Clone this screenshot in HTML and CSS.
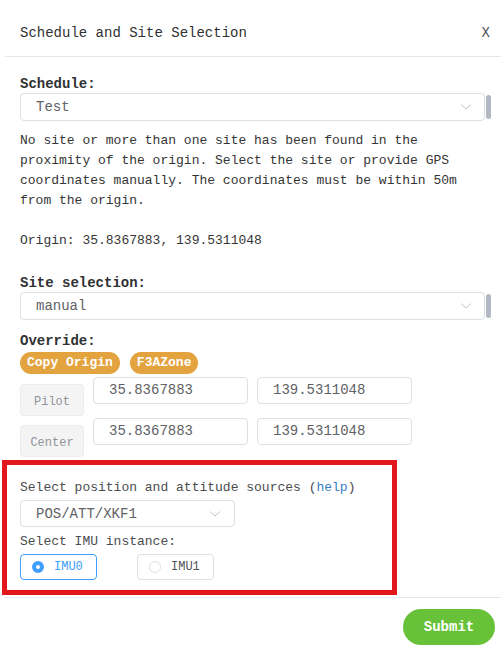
FILE: index.html
```html
<!DOCTYPE html>
<html>
<head>
<meta charset="utf-8">
<link rel="stylesheet" href="styles.css">
</head>
<body>
<div class="modal">
  <div class="header">
    <span class="title">Schedule and Site Selection</span>
    <span class="close">X</span>
  </div>
  <div class="content">
    <div class="label">Schedule:</div>
    <div class="select-row">
      <div class="select wide"><span>Test</span>
        <svg class="chev" width="12" height="8" viewBox="0 0 12 8"><polyline points="1,1.5 6,6 11,1.5" fill="none" stroke="#c0c4cc" stroke-width="1"/></svg>
      </div>
      <div class="scrollbar"></div>
    </div>
    <p class="info">No site or more than one site has been found in the proximity of the origin. Select the site or provide GPS coordinates manually. The coordinates must be within 50m from the origin.<br><br>Origin: 35.8367883, 139.5311048</p>
    <div class="label site">Site selection:</div>
    <div class="select-row">
      <div class="select wide"><span>manual</span>
        <svg class="chev" width="12" height="8" viewBox="0 0 12 8"><polyline points="1,1.5 6,6 11,1.5" fill="none" stroke="#c0c4cc" stroke-width="1"/></svg>
      </div>
      <div class="scrollbar"></div>
    </div>
    <div class="label override">Override:</div>
    <div class="tags">
      <span class="tag">Copy Origin</span>
      <span class="tag">F3AZone</span>
    </div>
    <div class="coord-row">
      <span class="coord-btn">Pilot</span>
      <div class="input">35.8367883</div>
      <div class="input">139.5311048</div>
    </div>
    <div class="coord-row">
      <span class="coord-btn">Center</span>
      <div class="input">35.8367883</div>
      <div class="input">139.5311048</div>
    </div>
    <div class="highlight">
      <div class="line">Select position and attitude sources (<span class="link">help</span>)</div>
      <div class="select small"><span>POS/ATT/XKF1</span>
        <svg class="chev" width="12" height="8" viewBox="0 0 12 8"><polyline points="1,1.5 6,6 11,1.5" fill="none" stroke="#c0c4cc" stroke-width="1"/></svg>
      </div>
      <div class="line">Select IMU instance:</div>
      <div class="radios">
        <span class="radio checked"><span class="dot"></span>IMU0</span>
        <span class="radio"><span class="dot"></span>IMU1</span>
      </div>
    </div>
  </div>
  <div class="footer">
    <span class="submit">Submit</span>
  </div>
</div>
</body>
</html>
```
FILE: styles.css
```css
html, body {
  margin: 0;
  padding: 0;
  background: #ffffff;
}
body {
  font-family: "Liberation Mono", "DejaVu Sans Mono", monospace;
  color: #606266;
  width: 501px;
  height: 646px;
  overflow: hidden;
}
.modal {
  display: flex;
  flex-direction: column;
}
.header {
  margin-left: 5px;
  height: 57px;
  box-sizing: border-box;
  padding: 23px 11px 0 15px;
  border-bottom: 1px solid #e4e7ed;
  display: flex;
  justify-content: space-between;
  font-size: 14px;
  line-height: 20px;
  color: #303133;
}
.close {
  color: #505257;
}
.content {
  padding: 0 0 0 20px;
}
.label {
  margin-top: 19px;
  font-size: 14px;
  font-weight: bold;
  line-height: 16px;
  color: #303133;
}
.label.site {
  margin-top: 24px;
}
.label.override {
  margin-top: 13px;
}
.select-row {
  display: flex;
  align-items: center;
  margin-top: 1px;
}
.select {
  box-sizing: border-box;
  height: 28px;
  border: 1px solid #dcdfe6;
  border-radius: 4px;
  display: flex;
  align-items: center;
  justify-content: space-between;
  padding: 0 12px 0 15px;
  font-size: 14px;
  color: #606266;
  background: #fff;
}
.select.wide {
  width: 465px;
}
.scrollbar {
  width: 5px;
  height: 24px;
  margin-left: 1px;
  border-radius: 3px;
  background: #b3b8c4;
}
.info {
  margin: 10px 0 0 0;
  font-size: 13px;
  line-height: 20px;
  color: #353535;
  width: 470px;
}
.tags {
  display: flex;
  gap: 10px;
  margin-top: 3px;
}
.tag {
  height: 22px;
  line-height: 22px;
  padding: 0 7px;
  border-radius: 11px;
  background: #e3a33f;
  color: #ffffff;
  font-size: 13px;
  font-weight: bold;
}
.coord-row {
  display: flex;
  align-items: flex-start;
  gap: 9px;
  margin-top: 3px;
}
.coord-row + .coord-row {
  margin-top: 2px;
}
.coord-btn {
  box-sizing: border-box;
  width: 64px;
  height: 32px;
  margin-top: 7px;
  border: 1px solid #ebebee;
  border-radius: 4px;
  background: #f4f4f5;
  color: #909399;
  font-size: 12px;
  line-height: 30px;
  text-align: center;
  padding-top: 2px;
}
.input {
  box-sizing: border-box;
  width: 155px;
  height: 27px;
  border: 1px solid #dcdfe6;
  border-radius: 4px;
  padding: 0 15px;
  font-size: 14px;
  line-height: 24px;
  color: #606266;
}
.highlight {
  margin: 3px 0 0 -18px;
  width: 395px;
  box-sizing: border-box;
  border: 5px solid #e3161e;
  padding: 13px 0 10px 13px;
}
.line {
  font-size: 13px;
  line-height: 20px;
  color: #4a4c50;
}
.link {
  color: #3a7fc4;
}
.select.small {
  width: 215px;
  height: 27px;
  margin: 2px 0 5px 0;
  padding: 0 13px 0 15px;
}
.radios {
  display: flex;
  gap: 40px;
  margin-top: 2px;
}
.radio {
  box-sizing: border-box;
  width: 77px;
  height: 26px;
  border: 1px solid #dcdfe6;
  border-radius: 4px;
  display: flex;
  align-items: center;
  padding-left: 11px;
  gap: 10px;
  font-size: 12px;
  color: #505257;
}
.dot {
  box-sizing: border-box;
  width: 12px;
  height: 12px;
  border-radius: 50%;
  border: 1px solid #dcdfe6;
  background: #fff;
}
.radio.checked {
  border-color: #409eff;
  color: #409eff;
}
.radio.checked .dot {
  border: 4px solid #409eff;
  background: #fff;
}
.footer {
  margin-left: 5px;
  margin-top: 2px;
  border-top: 1px solid #e4e7ed;
  display: flex;
  justify-content: flex-end;
  padding: 11px 6px 0 0;
}
.submit {
  width: 92px;
  height: 36px;
  border-radius: 18px;
  background: #67c23a;
  color: #fff;
  font-size: 14px;
  font-weight: bold;
  line-height: 36px;
  text-align: center;
}
```
